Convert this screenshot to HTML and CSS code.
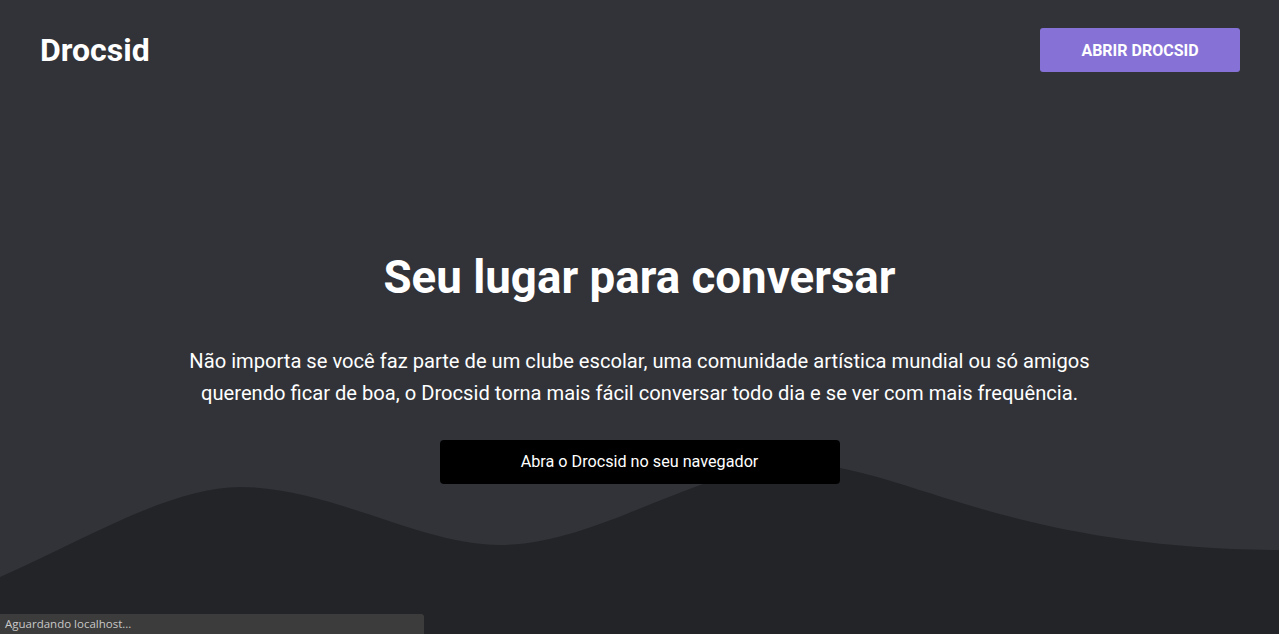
FILE: index.html
```html
<!DOCTYPE html>
<html lang="pt-BR">
<head>
<meta charset="utf-8">
<title>Drocsid</title>
<link rel="stylesheet" href="styles.css">
</head>
<body>
<div class="page">
  <svg class="wave" viewBox="0 0 1279 634" preserveAspectRatio="none" aria-hidden="true">
    <path d="M0,577 C80,542 170,487 240,487 C330,487 420,545 500,545 C600,545 700,464 800,464 C900,464 1000,548 1279,550 L1279,634 L0,634 Z" fill="#232428"/>
  </svg>
  <header class="header">
    <div class="logo">Drocsid</div>
    <a class="open-btn" href="#">ABRIR DROCSID</a>
  </header>
  <main class="hero">
    <h1 class="title">Seu lugar para conversar</h1>
    <p class="lead">Não importa se você faz parte de um clube escolar, uma comunidade artística mundial ou só amigos querendo ficar de boa, o Drocsid torna mais fácil conversar todo dia e se ver com mais frequência.</p>
    <a class="browser-btn" href="#">Abra o Drocsid no seu navegador</a>
  </main>
  <div class="status">Aguardando localhost...</div>
</div>
</body>
</html>
```

FILE: styles.css
```css
* { box-sizing: border-box; }
html, body {
  margin: 0;
  padding: 0;
  height: 100%;
}
body {
  background: #313338;
  font-family: Roboto, "Noto Sans", sans-serif;
  color: #ffffff;
  overflow: hidden;
}
.page {
  position: relative;
  width: 100%;
  height: 634px;
  overflow: hidden;
}
.wave {
  position: absolute;
  left: 0;
  top: 0;
  width: 100%;
  height: 100%;
  z-index: 0;
}
.header {
  position: relative;
  z-index: 1;
  display: flex;
  justify-content: space-between;
  align-items: center;
  padding: 28px 39px 28px 40px;
}
.logo {
  font-size: 32px;
  line-height: 40px;
  font-weight: 700;
  color: #ffffff;
}
.open-btn {
  display: flex;
  align-items: center;
  justify-content: center;
  width: 200px;
  height: 44px;
  border-radius: 3px;
  background: #8672d6;
  color: #ffffff;
  font-size: 16px;
  font-weight: 700;
  text-decoration: none;
}
.hero {
  position: relative;
  z-index: 1;
  display: flex;
  flex-direction: column;
  align-items: center;
  text-align: center;
  padding-top: 150px;
}
.title {
  margin: 0;
  font-size: 45.7px;
  line-height: 56px;
  font-weight: 700;
}
.lead {
  margin: 39px 0 0;
  width: 930px;
  font-size: 20.15px;
  line-height: 32px;
  font-weight: 400;
}
.browser-btn {
  display: flex;
  align-items: center;
  justify-content: center;
  margin-top: 31px;
  width: 400px;
  height: 44px;
  border-radius: 4px;
  background: #000000;
  color: #ffffff;
  font-size: 16.2px;
  padding-bottom: 2px;
  text-decoration: none;
}
.status {
  position: absolute;
  left: 0;
  bottom: 0;
  z-index: 2;
  width: 424px;
  height: 20px;
  padding: 3px 5px 0;
  background: #3c3c3c;
  border-top-right-radius: 3px;
  color: #c8c8c8;
  font-family: "Open Sans", "Liberation Sans", sans-serif;
  font-size: 11.5px;
  line-height: 14px;
}
```
